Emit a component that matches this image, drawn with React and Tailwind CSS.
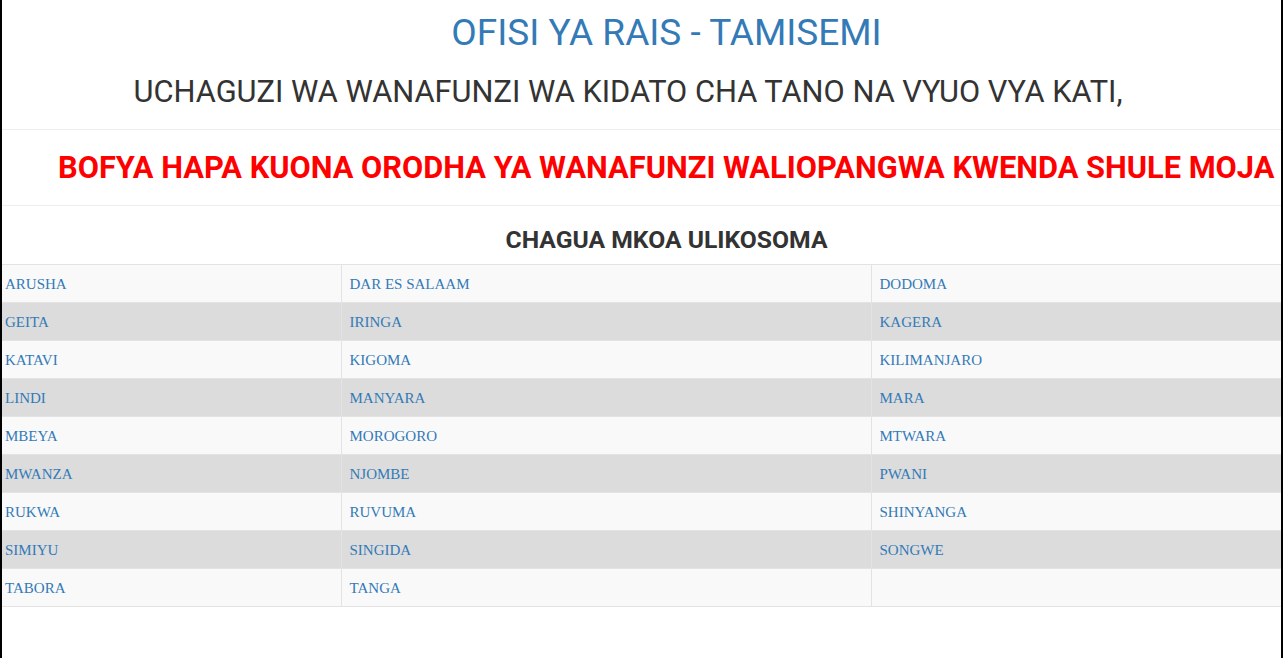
import React from "react";

const mikoa = [
  ["ARUSHA", "DAR ES SALAAM", "DODOMA"],
  ["GEITA", "IRINGA", "KAGERA"],
  ["KATAVI", "KIGOMA", "KILIMANJARO"],
  ["LINDI", "MANYARA", "MARA"],
  ["MBEYA", "MOROGORO", "MTWARA"],
  ["MWANZA", "NJOMBE", "PWANI"],
  ["RUKWA", "RUVUMA", "SHINYANGA"],
  ["SIMIYU", "SINGIDA", "SONGWE"],
  ["TABORA", "TANGA", ""],
];

export default function App() {
  return (
    <div
      className="min-h-screen w-[1283px] bg-white border-l-2 border-r-2 border-black"
      style={{ fontFamily: "Roboto, 'Liberation Sans', sans-serif" }}
    >
      <h1 className="pt-[13px] pl-[50px] text-center text-[37px] leading-[40px] text-[#337ab7]">
        OFISI YA RAIS - TAMISEMI
      </h1>
      <h2 className="mt-[22px] pr-[27px] text-center text-[30.8px] leading-[34px] text-[#333]">
        UCHAGUZI WA WANAFUNZI WA KIDATO CHA TANO NA VYUO VYA KATI,
      </h2>
      <hr className="mt-[20px] border-t border-[#eee]" />
      <div className="pt-[20px] pb-[19px] pl-[56px] whitespace-nowrap">
        <a href="#" className="text-[30.8px] leading-[36px] font-bold text-[#ff0000]">
          BOFYA HAPA KUONA ORODHA YA WANAFUNZI WALIOPANGWA KWENDA SHULE MOJA
        </a>
      </div>
      <hr className="border-t border-[#eee]" />
      <h3 className="mt-[20px] pl-[50px] text-center text-[24.7px] leading-[28px] font-bold text-[#333]">
        CHAGUA MKOA ULIKOSOMA
      </h3>
      <table
        className="mt-[10px] w-full border-collapse"
        style={{ fontFamily: "'Liberation Serif', serif" }}
      >
        <colgroup>
          <col className="w-[339px]" />
          <col className="w-[530px]" />
          <col />
        </colgroup>
        <tbody>
          {mikoa.map((row, i) => (
            <tr
              key={i}
              className={i % 2 === 0 ? "bg-[#f9f9f9]" : "bg-[#dcdcdc]"}
            >
              {row.map((m, j) => (
                <td
                  key={j}
                  className={`h-[38px] px-[3px] border-t border-b border-[#e3e3e3] text-[15px] leading-[20px] align-middle ${
                    j > 0 ? "border-l pl-[8px]" : ""
                  }`}
                >
                  <a href="#" className="text-[#337ab7]">
                    {m}
                  </a>
                </td>
              ))}
            </tr>
          ))}
        </tbody>
      </table>
    </div>
  );
}
